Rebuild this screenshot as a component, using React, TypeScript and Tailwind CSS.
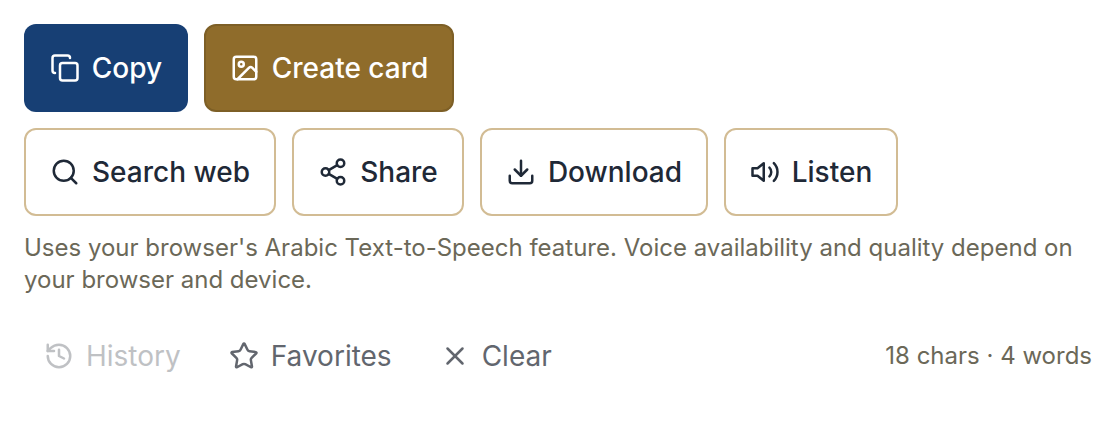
import { Copy, Image, Search, Share2, Download, History, Star, X } from "lucide-react";

function Speaker({ size = 30 }: { size?: number; strokeWidth?: number }) {
  return (
    <svg width={size} height={size} viewBox="0 0 24 24" fill="none" stroke="currentColor" strokeWidth={2} strokeLinecap="round" strokeLinejoin="round">
      <polygon points="11 5 6 9 2 9 2 15 6 15 11 19 11 5" />
      <path d="M15.54 8.46a5 5 0 0 1 0 7.07" />
      <path d="M19.07 4.93a10 10 0 0 1 0 14.14" />
    </svg>
  );
}

const outlined = [
  { label: "Search web", icon: Search, w: "w-[252px]" },
  { label: "Share", icon: Share2, w: "w-[172px]" },
  { label: "Download", icon: Download, w: "w-[228px]" },
  { label: "Listen", icon: Speaker, w: "w-[174px]" },
];

export default function App() {
  return (
    <div className="w-[1116px] h-[424px] bg-white px-6 pt-6 font-['Inter',sans-serif]">
      {/* Main actions */}
      <div className="flex gap-4">
        <button className="flex h-[88px] w-[164px] items-center justify-center gap-3 rounded-xl bg-[#173f74] text-[28px] font-medium text-white">
          <Copy size={30} strokeWidth={2} />
          Copy
        </button>
        <button className="flex h-[88px] w-[250px] items-center justify-center gap-3 rounded-xl border-2 border-[#7d5f26] bg-[#8f6c2b] text-[28px] font-medium text-white">
          <Image size={30} strokeWidth={2} />
          Create card
        </button>
      </div>

      {/* Secondary actions */}
      <div className="mt-4 flex gap-4">
        {outlined.map((b) => (
          <button
            key={b.label}
            className={`flex h-[88px] ${b.w} items-center justify-center gap-3 rounded-xl border-2 border-[#d2bc94] bg-white text-[28px] font-medium text-[#1f2937]`}
          >
            <b.icon size={30} strokeWidth={2} />
            {b.label}
          </button>
        ))}
      </div>

      <p className="mt-4 w-[1068px] text-[24px] leading-8 text-[#6b6858]">
        Uses your browser's Arabic Text-to-Speech feature. Voice availability and quality depend on your browser and device.
      </p>

      {/* Footer */}
      <div className="mt-[24px] flex items-center justify-between">
        <div className="flex items-center gap-2 text-[28px] text-[#62666e]">
          <button className="flex h-[72px] items-center gap-3 px-5 opacity-40">
            <History size={30} strokeWidth={2} />
            History
          </button>
          <button className="flex h-[72px] items-center gap-3 px-5">
            <Star size={30} strokeWidth={2} />
            Favorites
          </button>
          <button className="flex h-[72px] items-center gap-3 px-5">
            <X size={30} strokeWidth={2} />
            Clear
          </button>
        </div>
        <span className="text-[24px] text-[#6b6858]">18 chars · 4 words</span>
      </div>
    </div>
  );
}
